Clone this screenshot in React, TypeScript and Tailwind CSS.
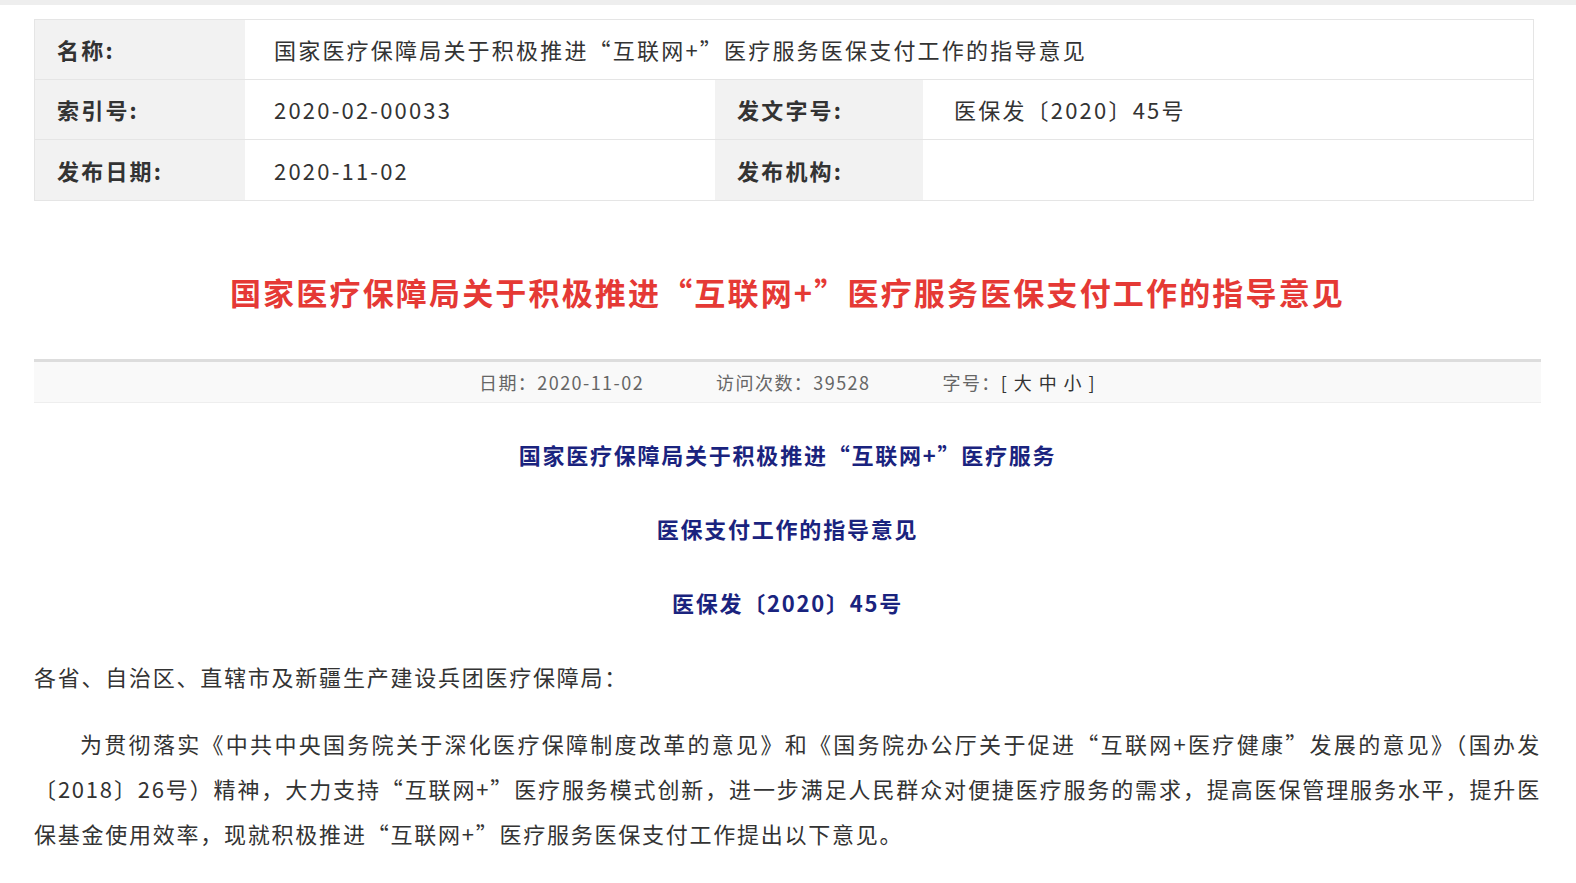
export default function App() {
  const font = { fontFamily: '"Noto Sans CJK SC", "Noto Sans", sans-serif' };
  return (
    <div className="bg-white min-h-screen text-[#333]" style={font}>
      <div className="h-[5px] bg-[#eeeeee]" />
      <div className="pl-[34px] pr-[35px]">
        <div className="mt-[14px] mr-[7px] border border-[#e5e5e5] text-[22px] tracking-[0.1em]">
          <div className="flex h-[60px] border-b border-[#e5e5e5]">
            <div className="w-[210px] bg-[#f2f2f2] flex items-center pl-[22px] font-bold">名称:</div>
            <div className="flex-1 flex items-center pl-[29px]">国家医疗保障局关于积极推进“互联网+”医疗服务医保支付工作的指导意见</div>
          </div>
          <div className="flex h-[60px] border-b border-[#e5e5e5]">
            <div className="w-[210px] bg-[#f2f2f2] flex items-center pl-[22px] font-bold">索引号:</div>
            <div className="w-[470px] flex items-center pl-[29px]">2020-02-00033</div>
            <div className="w-[208px] bg-[#f2f2f2] flex items-center pl-[22px] font-bold">发文字号:</div>
            <div className="flex-1 flex items-center pl-[31px]">医保发〔2020〕45号</div>
          </div>
          <div className="flex h-[60px]">
            <div className="w-[210px] bg-[#f2f2f2] flex items-center pl-[22px] font-bold">发布日期:</div>
            <div className="w-[470px] flex items-center pl-[29px]">2020-11-02</div>
            <div className="w-[208px] bg-[#f2f2f2] flex items-center pl-[22px] font-bold">发布机构:</div>
            <div className="flex-1" />
          </div>
        </div>
        <h1 className="mt-[63px] text-center text-[31px] font-bold text-[#e53935] leading-[56px] tracking-[0.07em]">
          国家医疗保障局关于积极推进“互联网+”医疗服务医保支付工作的指导意见
        </h1>
        <div className="mt-[39px] border-t-[3px] border-[#dddddd] border-b border-b-[#eeeeee] bg-[#f9f9f9] h-[44px] flex items-center justify-center gap-[72px] text-[18px] text-[#666] tracking-[0.08em]">
          <span>日期：2020-11-02</span>
          <span>访问次数：39528</span>
          <span>字号：<span className="text-[#333]">[ 大 中 小 ]</span></span>
        </div>
        <div className="text-center text-[22px] font-bold text-[#1a237e] leading-[30px] tracking-[0.08em]">
          <p className="mt-[36px]">国家医疗保障局关于积极推进“互联网+”医疗服务</p>
          <p className="mt-[44px]">医保支付工作的指导意见</p>
          <p className="mt-[44px]">医保发〔2020〕45号</p>
        </div>
        <p className="mt-[44px] text-[22px] leading-[30px] tracking-[0.08em]">各省、自治区、直辖市及新疆生产建设兵团医疗保障局：</p>
        <p className="mt-[30px] text-[22px] leading-[45px] indent-[46px] text-justify tracking-[0.08em]">
          为贯彻落实《中共中央国务院关于深化医疗保障制度改革的意见》和《国务院办公厅关于促进“互联网+医疗健康”发展的意见》（国办发〔2018〕26号）精神，大力支持“互联网+”医疗服务模式创新，进一步满足人民群众对便捷医疗服务的需求，提高医保管理服务水平，提升医保基金使用效率，现就积极推进“互联网+”医疗服务医保支付工作提出以下意见。
        </p>
      </div>
    </div>
  );
}
